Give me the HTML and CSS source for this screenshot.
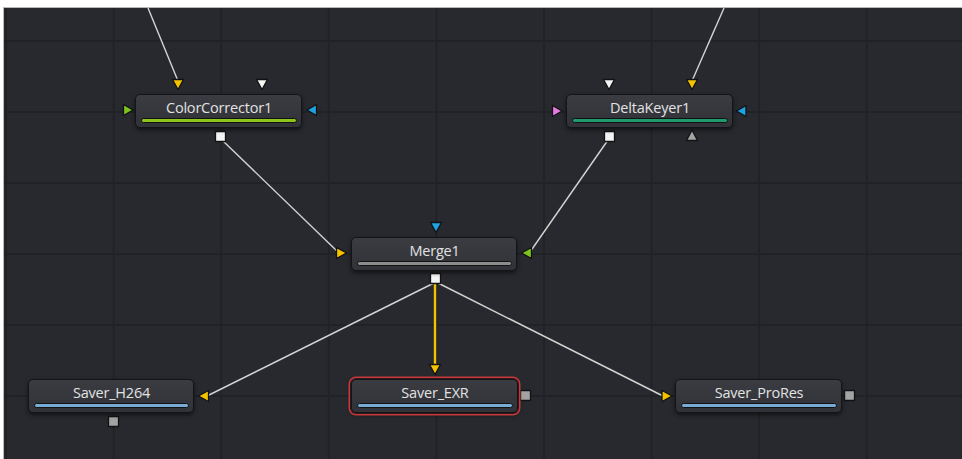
FILE: index.html
```html
<!DOCTYPE html>
<html>
<head>
<meta charset="utf-8">
<link rel="stylesheet" href="styles.css">
</head>
<body>
<div class="canvas">
  <svg class="wires" width="958" height="451" viewBox="4 8 958 451" xmlns="http://www.w3.org/2000/svg">
    <g class="wire">
      <line x1="148" y1="8" x2="178" y2="81"/>
      <line x1="724" y1="8" x2="692" y2="81"/>
      <line x1="222" y1="140" x2="338" y2="252"/>
      <line x1="608" y1="140" x2="530" y2="252"/>
      <line x1="434" y1="283" x2="207" y2="396"/>
      <line x1="438" y1="283" x2="663" y2="396"/>
    </g>
    <line class="wire-active" x1="435" y1="283" x2="435" y2="367"/>
    <g class="port">
      <!-- ColorCorrector1 -->
      <polygon class="yellow" points="172.5,79.5 183.5,79.5 178,89.5"/>
      <polygon class="white" points="256.5,79.5 267.5,79.5 262,89.5"/>
      <polygon class="green" points="123.5,104.5 123.5,115.5 133,110"/>
      <polygon class="blue" points="316.5,104.5 316.5,115.5 307,110"/>
      <rect class="white" x="215.5" y="131.5" width="10" height="10"/>
      <!-- DeltaKeyer1 -->
      <polygon class="white" points="603.5,79.5 614.5,79.5 609,89.5"/>
      <polygon class="yellow" points="686.5,79.5 697.5,79.5 692,89.5"/>
      <polygon class="pink" points="552.5,105.5 552.5,116.5 562,111"/>
      <polygon class="blue" points="746,105.5 746,116.5 736.5,111"/>
      <rect class="white" x="604.5" y="131.5" width="10" height="10"/>
      <polygon class="gray" points="692,130 686.5,140.5 697.5,140.5"/>
      <!-- Merge1 -->
      <polygon class="blue" points="430.5,222.5 441.5,222.5 436,232.5"/>
      <polygon class="yellow" points="336.5,247.5 336.5,258.5 346.5,253"/>
      <polygon class="green" points="531.5,247.5 531.5,258.5 521.5,253"/>
      <rect class="white" x="430.5" y="273.5" width="10" height="10"/>
      <!-- Saver_H264 -->
      <polygon class="yellow" points="208.5,390.5 208.5,401.5 198.5,396"/>
      <rect class="gray" x="108.5" y="416.5" width="10" height="10"/>
      <!-- Saver_EXR -->
      <polygon class="yellow" points="429.5,364.5 440.5,364.5 435,374.5"/>
      <rect class="gray" x="520.5" y="390.5" width="10" height="10"/>
      <!-- Saver_ProRes -->
      <polygon class="yellow" points="662,390.5 662,401.5 672,396"/>
      <rect class="gray" x="844.5" y="390.5" width="10" height="10"/>
    </g>
  </svg>

  <div class="node" style="left:131px;top:86px;width:167px;height:34px">
    <span class="label">ColorCorrector1</span>
    <span class="bar bar-green"></span>
  </div>
  <div class="node" style="left:562px;top:86px;width:167px;height:34px">
    <span class="label">DeltaKeyer1</span>
    <span class="bar bar-teal"></span>
  </div>
  <div class="node" style="left:347px;top:229px;width:166px;height:34px">
    <span class="label">Merge1</span>
    <span class="bar bar-gray"></span>
  </div>
  <div class="node" style="left:24px;top:371px;width:166px;height:34px">
    <span class="label">Saver_H264</span>
    <span class="bar bar-blue"></span>
  </div>
  <div class="node node-selected" style="left:347px;top:371px;width:167px;height:34px">
    <span class="label">Saver_EXR</span>
    <span class="bar bar-blue"></span>
  </div>
  <div class="node" style="left:671px;top:371px;width:167px;height:34px">
    <span class="label">Saver_ProRes</span>
    <span class="bar bar-blue"></span>
  </div>
</div>
</body>
</html>
```

FILE: styles.css
```css
html, body {
  margin: 0;
  padding: 0;
  background: #ffffff;
  overflow: hidden;
}

.canvas {
  position: relative;
  margin: 7px 0 0 3px;
  width: 958px;
  height: 451px;
  border-top: 1px solid #b8b8b8;
  border-left: 1px solid #b8b8b8;
  background-color: #28292e;
  background-image:
    linear-gradient(to right, #212226 0, #212226 2px, transparent 2px),
    linear-gradient(to bottom, #212226 0, #212226 2px, transparent 2px);
  background-size: 107.6px 71px, 107.6px 71px;
  background-position: 1px 0, 0 32px;
  overflow: hidden;
}

.wires {
  position: absolute;
  left: 0;
  top: 0;
}

.wire line {
  stroke: #d4d4d4;
  stroke-width: 1.4;
}

.wire-active {
  stroke: #f4c300;
  stroke-width: 2.4;
}

.port polygon,
.port rect {
  stroke: #111214;
  stroke-width: 1.3;
  stroke-linejoin: round;
}

.yellow { fill: #f4c300; }
.white { fill: #f4f4f4; }
.green { fill: #7cc41c; }
.blue { fill: #1ea4e2; }
.pink { fill: #e67ae0; }
.gray { fill: #a3a3a3; }

.node {
  position: absolute;
  box-sizing: border-box;
  display: flex;
  flex-direction: column;
  justify-content: space-between;
  padding: 4px 4px 4px 5px;
  background: linear-gradient(to bottom, #3a3c42, #303238);
  border: 1px solid #131417;
  border-radius: 5px;
  box-shadow: 0 2px 4px rgba(0, 0, 0, 0.55);
}

.node-selected {
  box-shadow: 0 0 0 1px #2a1a1a, 0 0 0 2.5px #c8383a, 0 2px 5px rgba(0, 0, 0, 0.5);
}

.label {
  font-family: "Open Sans", "Noto Sans", sans-serif;
  font-size: 14.5px;
  font-weight: 500;
  line-height: 17px;
  color: #e2e2e2;
  text-align: center;
  letter-spacing: -0.2px;
}

.bar {
  display: block;
  height: 3px;
  border: 1px solid #111214;
  border-radius: 3px;
}

.bar-green { background: #8fc41a; }
.bar-teal { background: #1f9a6c; }
.bar-gray { background: #8c8c8c; }
.bar-blue { background: #78aad6; }
```
